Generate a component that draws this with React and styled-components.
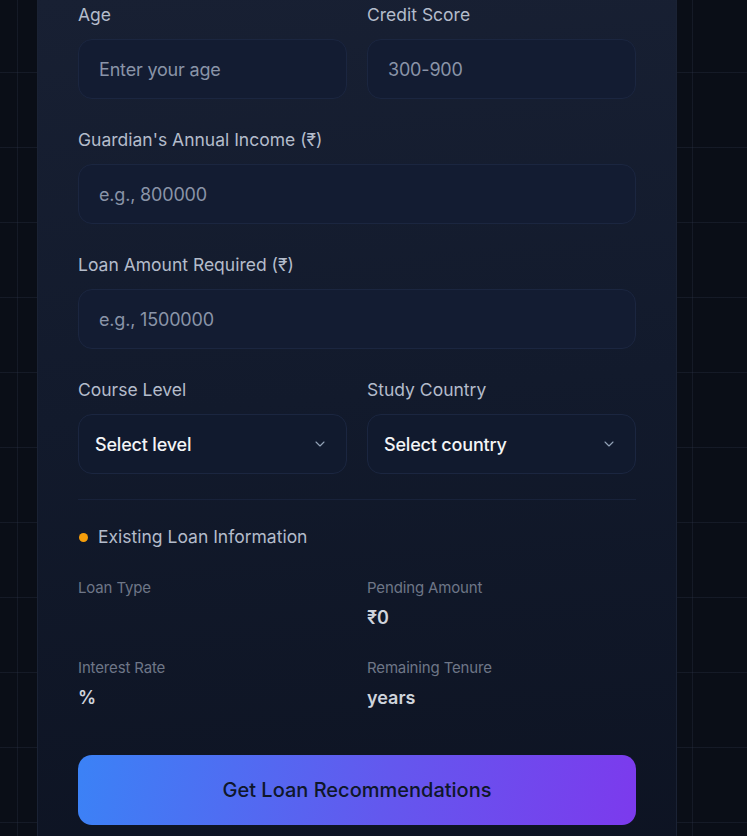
import React from "react";
import styled, { createGlobalStyle } from "styled-components";

const GlobalStyle = createGlobalStyle`
    * { box-sizing: border-box; }
    html, body {
        margin: 0;
        padding: 0;
        background: #0a0e17;
    }
    body {
        font-family: Inter, "Noto Sans", "DejaVu Sans", sans-serif;
    }
`;

export default function App() {
    return (
        <>
            <GlobalStyle />
            <Page>
                <Card>
                    <Row>
                        <Field>
                            <Label>Age</Label>
                            <Input type="text" placeholder="Enter your age" />
                        </Field>
                        <Field>
                            <Label>Credit Score</Label>
                            <Input type="text" placeholder="300-900" />
                        </Field>
                    </Row>

                    <Field>
                        <Label>Guardian's Annual Income (₹)</Label>
                        <Input type="text" placeholder="e.g., 800000" />
                    </Field>

                    <Field>
                        <Label>Loan Amount Required (₹)</Label>
                        <Input type="text" placeholder="e.g., 1500000" />
                    </Field>

                    <Row>
                        <Field>
                            <Label>Course Level</Label>
                            <Select>
                                <span>Select level</span>
                                <Chevron />
                            </Select>
                        </Field>
                        <Field>
                            <Label>Study Country</Label>
                            <Select>
                                <span>Select country</span>
                                <Chevron />
                            </Select>
                        </Field>
                    </Row>

                    <Divider />

                    <SectionTitle>
                        <Dot />
                        Existing Loan Information
                    </SectionTitle>

                    <InfoGrid>
                        <InfoItem>
                            <InfoLabel>Loan Type</InfoLabel>
                            <InfoValue></InfoValue>
                        </InfoItem>
                        <InfoItem>
                            <InfoLabel>Pending Amount</InfoLabel>
                            <InfoValue>₹0</InfoValue>
                        </InfoItem>
                        <InfoItem>
                            <InfoLabel>Interest Rate</InfoLabel>
                            <InfoValue>%</InfoValue>
                        </InfoItem>
                        <InfoItem>
                            <InfoLabel>Remaining Tenure</InfoLabel>
                            <InfoValue>years</InfoValue>
                        </InfoItem>
                    </InfoGrid>

                    <Button>Get Loan Recommendations</Button>
                </Card>
            </Page>
        </>
    );
}

function Chevron() {
    return (
        <svg width="16" height="16" viewBox="0 0 24 24" fill="none" stroke="#94a3b8" strokeWidth="1.6" strokeLinecap="round" strokeLinejoin="round">
            <path d="m6 9 6 6 6-6" />
        </svg>
    );
}

const Page = styled.div`
    height: 836px;
    overflow: hidden;
    padding-left: 37px;
    background-color: #0a0e17;
    background-image:
        linear-gradient(rgba(60, 70, 95, 0.22) 1px, transparent 1px),
        linear-gradient(90deg, rgba(60, 70, 95, 0.22) 1px, transparent 1px);
    background-size: 75px 75px;
    background-position: 17px 72px;
`;

const Card = styled.div`
    width: 640px;
    padding: 3px 40px 60px 40px;
    background: linear-gradient(175deg, #182033 0%, #121a2c 45%, #0d1322 100%);
    border: 1px solid #1a2234;
    border-top: none;
    border-radius: 0 0 24px 24px;
    display: flex;
    flex-direction: column;
    gap: 29px;
`;

const Row = styled.div`
    display: grid;
    grid-template-columns: 1fr 1fr;
    gap: 20px;
`;

const Field = styled.div`
    display: flex;
    flex-direction: column;
`;

const Label = styled.label`
    font-size: 17.5px;
    line-height: 24px;
    color: #b4bccb;
    margin-bottom: 12px;
`;

const Input = styled.input`
    height: 60px;
    width: 100%;
    padding: 0 20px;
    border-radius: 14px;
    border: 1px solid #1b2640;
    background: #131c32;
    font-family: inherit;
    font-size: 18px;
    color: #e5e7eb;
    outline: none;

    &::placeholder {
        color: #8a94a8;
        letter-spacing: -0.01em;
    }
`;

const Select = styled.div`
    height: 60px;
    padding: 0 18px 0 16px;
    border-radius: 14px;
    border: 1px solid #1b2640;
    background: #111a2e;
    display: flex;
    align-items: center;
    justify-content: space-between;

    span {
        font-size: 18px;
        font-weight: 500;
        color: #f3f4f6;
        letter-spacing: -0.01em;
    }
`;

const Divider = styled.div`
    height: 1px;
    background: #18223a;
    margin-top: -4px;
`;

const SectionTitle = styled.div`
    display: flex;
    align-items: center;
    gap: 10px;
    font-size: 17.5px;
    line-height: 24px;
    color: #b4bccb;
    margin-top: -4px;
`;

const Dot = styled.span`
    width: 9px;
    height: 9px;
    border-radius: 50%;
    background: #f59e0b;
    margin-left: 1px;
`;

const InfoGrid = styled.div`
    display: grid;
    grid-template-columns: 1fr 1fr;
    column-gap: 20px;
    row-gap: 28px;
`;

const InfoItem = styled.div`
    display: flex;
    flex-direction: column;
    gap: 8px;
`;

const InfoLabel = styled.div`
    font-size: 15px;
    line-height: 20px;
    color: #6e7687;
    letter-spacing: -0.01em;
`;

const InfoValue = styled.div`
    font-size: 18px;
    line-height: 24px;
    height: 24px;
    font-weight: 600;
    color: #cfd4dc;
`;

const Button = styled.button`
    height: 70px;
    width: 100%;
    margin-top: 16px;
    border: none;
    border-radius: 14px;
    background: linear-gradient(100deg, #3b82f6 0%, #6358ee 55%, #7c3aed 100%);
    font-family: inherit;
    font-size: 20px;
    font-weight: 500;
    color: #0f172a;
    cursor: pointer;
`;
